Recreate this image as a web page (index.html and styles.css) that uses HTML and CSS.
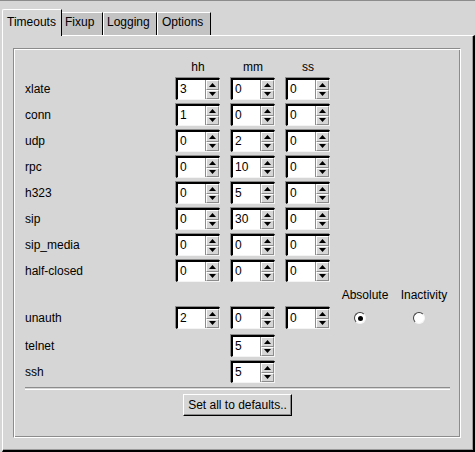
FILE: index.html
```html
<!DOCTYPE html>
<html>
<head>
<meta charset="utf-8">
<link rel="stylesheet" href="styles.css">
</head>
<body>
<div class="tabs">
  <div class="tab sel">Timeouts</div>
  <div class="tab t-fixup">Fixup</div>
  <div class="tab t-log">Logging</div>
  <div class="tab t-opt">Options</div>
</div>
<div class="pane">
  <div class="group">
    <div class="rows">
      <div class="row head"><span></span><span class="c">hh</span><span class="c">mm</span><span class="c">ss</span></div>

      <div class="row"><span class="lbl">xlate</span>
        <div class="spin"><div class="fld">3</div><div class="arrows"><div class="arr"><svg width="7" height="4"><polygon points="3.5,0 7,4 0,4"/></svg></div><div class="arr"><svg width="7" height="4"><polygon points="0,0 7,0 3.5,4"/></svg></div></div></div>
        <div class="spin"><div class="fld">0</div><div class="arrows"><div class="arr"><svg width="7" height="4"><polygon points="3.5,0 7,4 0,4"/></svg></div><div class="arr"><svg width="7" height="4"><polygon points="0,0 7,0 3.5,4"/></svg></div></div></div>
        <div class="spin"><div class="fld">0</div><div class="arrows"><div class="arr"><svg width="7" height="4"><polygon points="3.5,0 7,4 0,4"/></svg></div><div class="arr"><svg width="7" height="4"><polygon points="0,0 7,0 3.5,4"/></svg></div></div></div>
      </div>

      <div class="row"><span class="lbl">conn</span>
        <div class="spin"><div class="fld">1</div><div class="arrows"><div class="arr"><svg width="7" height="4"><polygon points="3.5,0 7,4 0,4"/></svg></div><div class="arr"><svg width="7" height="4"><polygon points="0,0 7,0 3.5,4"/></svg></div></div></div>
        <div class="spin"><div class="fld">0</div><div class="arrows"><div class="arr"><svg width="7" height="4"><polygon points="3.5,0 7,4 0,4"/></svg></div><div class="arr"><svg width="7" height="4"><polygon points="0,0 7,0 3.5,4"/></svg></div></div></div>
        <div class="spin"><div class="fld">0</div><div class="arrows"><div class="arr"><svg width="7" height="4"><polygon points="3.5,0 7,4 0,4"/></svg></div><div class="arr"><svg width="7" height="4"><polygon points="0,0 7,0 3.5,4"/></svg></div></div></div>
      </div>

      <div class="row"><span class="lbl">udp</span>
        <div class="spin"><div class="fld">0</div><div class="arrows"><div class="arr"><svg width="7" height="4"><polygon points="3.5,0 7,4 0,4"/></svg></div><div class="arr"><svg width="7" height="4"><polygon points="0,0 7,0 3.5,4"/></svg></div></div></div>
        <div class="spin"><div class="fld">2</div><div class="arrows"><div class="arr"><svg width="7" height="4"><polygon points="3.5,0 7,4 0,4"/></svg></div><div class="arr"><svg width="7" height="4"><polygon points="0,0 7,0 3.5,4"/></svg></div></div></div>
        <div class="spin"><div class="fld">0</div><div class="arrows"><div class="arr"><svg width="7" height="4"><polygon points="3.5,0 7,4 0,4"/></svg></div><div class="arr"><svg width="7" height="4"><polygon points="0,0 7,0 3.5,4"/></svg></div></div></div>
      </div>

      <div class="row"><span class="lbl">rpc</span>
        <div class="spin"><div class="fld">0</div><div class="arrows"><div class="arr"><svg width="7" height="4"><polygon points="3.5,0 7,4 0,4"/></svg></div><div class="arr"><svg width="7" height="4"><polygon points="0,0 7,0 3.5,4"/></svg></div></div></div>
        <div class="spin"><div class="fld">10</div><div class="arrows"><div class="arr"><svg width="7" height="4"><polygon points="3.5,0 7,4 0,4"/></svg></div><div class="arr"><svg width="7" height="4"><polygon points="0,0 7,0 3.5,4"/></svg></div></div></div>
        <div class="spin"><div class="fld">0</div><div class="arrows"><div class="arr"><svg width="7" height="4"><polygon points="3.5,0 7,4 0,4"/></svg></div><div class="arr"><svg width="7" height="4"><polygon points="0,0 7,0 3.5,4"/></svg></div></div></div>
      </div>

      <div class="row"><span class="lbl">h323</span>
        <div class="spin"><div class="fld">0</div><div class="arrows"><div class="arr"><svg width="7" height="4"><polygon points="3.5,0 7,4 0,4"/></svg></div><div class="arr"><svg width="7" height="4"><polygon points="0,0 7,0 3.5,4"/></svg></div></div></div>
        <div class="spin"><div class="fld">5</div><div class="arrows"><div class="arr"><svg width="7" height="4"><polygon points="3.5,0 7,4 0,4"/></svg></div><div class="arr"><svg width="7" height="4"><polygon points="0,0 7,0 3.5,4"/></svg></div></div></div>
        <div class="spin"><div class="fld">0</div><div class="arrows"><div class="arr"><svg width="7" height="4"><polygon points="3.5,0 7,4 0,4"/></svg></div><div class="arr"><svg width="7" height="4"><polygon points="0,0 7,0 3.5,4"/></svg></div></div></div>
      </div>

      <div class="row"><span class="lbl">sip</span>
        <div class="spin"><div class="fld">0</div><div class="arrows"><div class="arr"><svg width="7" height="4"><polygon points="3.5,0 7,4 0,4"/></svg></div><div class="arr"><svg width="7" height="4"><polygon points="0,0 7,0 3.5,4"/></svg></div></div></div>
        <div class="spin"><div class="fld">30</div><div class="arrows"><div class="arr"><svg width="7" height="4"><polygon points="3.5,0 7,4 0,4"/></svg></div><div class="arr"><svg width="7" height="4"><polygon points="0,0 7,0 3.5,4"/></svg></div></div></div>
        <div class="spin"><div class="fld">0</div><div class="arrows"><div class="arr"><svg width="7" height="4"><polygon points="3.5,0 7,4 0,4"/></svg></div><div class="arr"><svg width="7" height="4"><polygon points="0,0 7,0 3.5,4"/></svg></div></div></div>
      </div>

      <div class="row"><span class="lbl">sip_media</span>
        <div class="spin"><div class="fld">0</div><div class="arrows"><div class="arr"><svg width="7" height="4"><polygon points="3.5,0 7,4 0,4"/></svg></div><div class="arr"><svg width="7" height="4"><polygon points="0,0 7,0 3.5,4"/></svg></div></div></div>
        <div class="spin"><div class="fld">0</div><div class="arrows"><div class="arr"><svg width="7" height="4"><polygon points="3.5,0 7,4 0,4"/></svg></div><div class="arr"><svg width="7" height="4"><polygon points="0,0 7,0 3.5,4"/></svg></div></div></div>
        <div class="spin"><div class="fld">0</div><div class="arrows"><div class="arr"><svg width="7" height="4"><polygon points="3.5,0 7,4 0,4"/></svg></div><div class="arr"><svg width="7" height="4"><polygon points="0,0 7,0 3.5,4"/></svg></div></div></div>
      </div>

      <div class="row"><span class="lbl">half-closed</span>
        <div class="spin"><div class="fld">0</div><div class="arrows"><div class="arr"><svg width="7" height="4"><polygon points="3.5,0 7,4 0,4"/></svg></div><div class="arr"><svg width="7" height="4"><polygon points="0,0 7,0 3.5,4"/></svg></div></div></div>
        <div class="spin"><div class="fld">0</div><div class="arrows"><div class="arr"><svg width="7" height="4"><polygon points="3.5,0 7,4 0,4"/></svg></div><div class="arr"><svg width="7" height="4"><polygon points="0,0 7,0 3.5,4"/></svg></div></div></div>
        <div class="spin"><div class="fld">0</div><div class="arrows"><div class="arr"><svg width="7" height="4"><polygon points="3.5,0 7,4 0,4"/></svg></div><div class="arr"><svg width="7" height="4"><polygon points="0,0 7,0 3.5,4"/></svg></div></div></div>
      </div>

      <div class="row rhead"><span></span><span></span><span></span><span></span><span class="c">Absolute</span><span class="c">Inactivity</span></div>

      <div class="row"><span class="lbl">unauth</span>
        <div class="spin"><div class="fld">2</div><div class="arrows"><div class="arr"><svg width="7" height="4"><polygon points="3.5,0 7,4 0,4"/></svg></div><div class="arr"><svg width="7" height="4"><polygon points="0,0 7,0 3.5,4"/></svg></div></div></div>
        <div class="spin"><div class="fld">0</div><div class="arrows"><div class="arr"><svg width="7" height="4"><polygon points="3.5,0 7,4 0,4"/></svg></div><div class="arr"><svg width="7" height="4"><polygon points="0,0 7,0 3.5,4"/></svg></div></div></div>
        <div class="spin"><div class="fld">0</div><div class="arrows"><div class="arr"><svg width="7" height="4"><polygon points="3.5,0 7,4 0,4"/></svg></div><div class="arr"><svg width="7" height="4"><polygon points="0,0 7,0 3.5,4"/></svg></div></div></div>
        <span class="radio on"><span class="dot"></span></span>
        <span class="radio"></span>
      </div>

      <div class="row telnet"><span class="lbl">telnet</span><span></span>
        <div class="spin"><div class="fld">5</div><div class="arrows"><div class="arr"><svg width="7" height="4"><polygon points="3.5,0 7,4 0,4"/></svg></div><div class="arr"><svg width="7" height="4"><polygon points="0,0 7,0 3.5,4"/></svg></div></div></div>
      </div>

      <div class="row"><span class="lbl">ssh</span><span></span>
        <div class="spin"><div class="fld">5</div><div class="arrows"><div class="arr"><svg width="7" height="4"><polygon points="3.5,0 7,4 0,4"/></svg></div><div class="arr"><svg width="7" height="4"><polygon points="0,0 7,0 3.5,4"/></svg></div></div></div>
      </div>
    </div>
    <div class="sep"></div>
    <div class="btnrow"><button class="btn">Set all to defaults..</button></div>
  </div>
</div>
</body>
</html>
```

FILE: styles.css
```css
html, body {
  margin: 0;
  padding: 0;
}
body {
  width: 475px;
  height: 452px;
  overflow: hidden;
  background: #d6d6d6;
  border-top: 1px solid #8c8c8c;
  box-sizing: border-box;
  font-family: "Liberation Sans", Arial, sans-serif;
  font-size: 12px;
  color: #000;
}
.tabs {
  display: flex;
  align-items: flex-end;
  margin-top: 8px;
  padding-left: 2px;
  height: 26px;
}
.tab {
  box-sizing: border-box;
  line-height: 14px;
  border-top: 1px solid #fff;
  border-left: 1px solid #fff;
  border-right: 1px solid #000;
  background: #c3c3c3;
  height: 23px;
  padding-top: 2px;
  white-space: nowrap;
}
.tab.sel {
  background: #d6d6d6;
  height: 27px;
  padding-top: 5px;
  margin-bottom: -1px;
  width: 60px;
  padding-left: 4px;
  position: relative;
  z-index: 1;
  border-top-left-radius: 2px;
}
.t-fixup { width: 41px; padding-left: 3px; border-left: none; }
.t-log { width: 54px; padding-left: 3px; }
.t-opt { width: 54px; padding-left: 4px; }

.pane {
  box-sizing: border-box;
  margin-left: 2px;
  width: 473px;
  height: 417px;
  border-top: 1px solid #fff;
  border-left: 1px solid #fff;
  border-right: 2px solid #000;
  border-bottom: 2px solid #000;
  box-shadow: inset -1px -1px 0 #9a9a9a;
  padding-left: 10px;
  padding-top: 12px;
}
.group {
  box-sizing: border-box;
  width: 448px;
  height: 390px;
  border: 1px solid;
  border-color: #8c8c8c #fff #fff #8c8c8c;
  box-shadow: inset 1px 1px 0 #fff, inset -1px -1px 0 #8c8c8c;
  padding: 11px 0 0 11px;
}
.rows {
  display: flex;
  flex-direction: column;
  gap: 4px;
}
.row {
  display: grid;
  grid-template-columns: 140px 44px 44px 44px 48px 48px;
  column-gap: 11px;
  align-items: center;
  height: 22px;
}
.row.head {
  height: 14px;
  line-height: 14px;
}
.row.rhead {
  height: 17px;
  line-height: 14px;
}
.row.telnet {
  margin-top: 2px;
}
.c {
  text-align: center;
  white-space: nowrap;
}
.lbl {
  line-height: 14px;
}
.spin {
  box-sizing: border-box;
  width: 44px;
  height: 22px;
  display: flex;
  border-top: 2px solid #000;
  border-left: 2px solid #000;
  border-right: 1px solid #f4f4f4;
  border-bottom: 1px solid #f4f4f4;
  box-shadow: -1px -1px 0 #8c8c8c;
  background: #d6d6d6;
}
.fld {
  flex: 1;
  background: #fff;
  padding-left: 2px;
  line-height: 19px;
}
.arrows {
  width: 13px;
  display: flex;
  flex-direction: column;
  border-left: 1px solid #8c8c8c;
}
.arr {
  box-sizing: border-box;
  flex: 1;
  display: flex;
  align-items: center;
  justify-content: center;
  border-top: 1px solid #fff;
  border-left: 1px solid #fff;
  border-right: 1px solid #8c8c8c;
  border-bottom: 1px solid #8c8c8c;
  background: #d6d6d6;
}
.arr svg {
  display: block;
  fill: #000;
}
.radio {
  box-sizing: border-box;
  width: 12px;
  height: 12px;
  margin-left: 13px;
  border-radius: 50%;
  border: 1px solid;
  border-color: #404040 #f4f4f4 #f4f4f4 #404040;
  background: #fff;
  display: flex;
  align-items: center;
  justify-content: center;
}
.dot {
  width: 5px;
  height: 5px;
  border-radius: 50%;
  background: #000;
}
.sep {
  width: 425px;
  height: 1px;
  margin-top: 4px;
  border-top: 1px solid #8c8c8c;
  border-bottom: 1px solid #fff;
}
.btnrow {
  display: flex;
  justify-content: center;
  padding-right: 11px;
  margin-top: 4px;
}
.btn {
  box-sizing: border-box;
  width: 109px;
  height: 22px;
  margin-left: 1px;
  font-family: "Liberation Sans", Arial, sans-serif;
  font-size: 12px;
  color: #000;
  background: #d6d6d6;
  border: 1px solid;
  border-color: #fff #000 #000 #fff;
  box-shadow: inset -1px -1px 0 #8c8c8c;
  padding: 0;
  line-height: 18px;
}
```
